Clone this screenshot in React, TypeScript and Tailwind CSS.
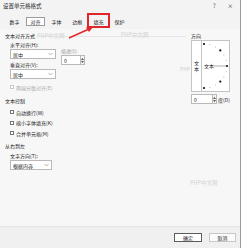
import React from "react";

const font = { fontFamily: '"Noto Sans CJK SC", "Noto Sans", sans-serif' };

function Select({ value, w }: { value: string; w: string }) {
  return (
    <div className={`flex h-[10px] items-center justify-between border border-[#b9b9b9] bg-white pl-[2px] pr-[1px] ${w}`}>
      <span className="text-[5px] leading-none text-[#222]">{value}</span>
      <svg width="5" height="4" viewBox="0 0 5 4" className="mr-[1px]">
        <path d="M0.5 1 L2.5 3 L4.5 1" stroke="#888" strokeWidth="0.6" fill="none" />
      </svg>
    </div>
  );
}

function Spin({ w }: { w: string }) {
  return (
    <div className="flex items-stretch">
      <div className={`flex h-[10px] items-center border border-[#b9b9b9] bg-white pl-[2px] ${w}`}>
        <span className="text-[5px] leading-none text-[#222]">0</span>
      </div>
      <div className="flex h-[10px] w-[4px] flex-col justify-center gap-[1px] border border-l-0 border-[#b9b9b9] bg-[#f4f4f4]">
        <svg width="3" height="2" viewBox="0 0 3 2"><path d="M0 2 L1.5 0 L3 2Z" fill="#555" /></svg>
        <svg width="3" height="2" viewBox="0 0 3 2"><path d="M0 0 L1.5 2 L3 0Z" fill="#555" /></svg>
      </div>
    </div>
  );
}

function Check({ label, disabled }: { label: string; disabled?: boolean }) {
  return (
    <div className="flex h-[10px] items-center gap-[2px]">
      <span className={`h-[4px] w-[4px] border ${disabled ? "border-[#c8c8c8]" : "border-[#777]"} bg-white`} />
      <span className={`text-[5px] leading-none ${disabled ? "text-[#aaa]" : "text-[#222]"}`}>{label}</span>
    </div>
  );
}

const tabs = ["数字", "对齐", "字体", "边框", "填充", "保护"];

export default function App() {
  return (
    <div style={font} className="relative flex h-[248px] w-[241px] flex-col overflow-hidden border-r border-[#9a9a9a] bg-[#f3f3f3]">
      {/* title bar */}
      <div className="flex h-[13px] items-center justify-between pl-[3px] pr-[7px]">
        <span className="text-[5.5px] leading-none text-[#222]">设置单元格格式</span>
        <div className="flex items-center gap-[12px] text-[5.5px] leading-none text-[#333]">
          <span>?</span>
          <span>×</span>
        </div>
      </div>

      {/* tabs */}
      <div className="flex h-[16px] items-center pl-[4px]">
        {tabs.map((t) => (
          <div key={t} className="relative flex w-[21px] items-center justify-center">
            <span
              className={`flex h-[9px] items-center px-[3px] text-[5px] leading-none text-[#222] ${
                t === "对齐" ? "border border-[#9c9c9c] bg-white" : ""
              }`}
            >
              {t}
            </span>
            {t === "填充" && (
              <span className="absolute left-[-1px] top-[-4px] h-[15px] w-[23px] border-2 border-[#e0262a]" />
            )}
          </div>
        ))}
      </div>

      {/* content */}
      <div className="flex flex-1 gap-[5px] bg-[#f7f7f7] pl-[5px] pr-[10px] pt-[3px]">
        <div className="flex flex-1 flex-col">
          <div className="flex items-center gap-[2px]">
            <span className="text-[5px] leading-[8px] text-[#222]">文本对齐方式</span>
            <span className="mt-[1px] h-px flex-1 bg-[#e6e6e6]" />
          </div>
          <div className="flex gap-[5px] pl-[5px] pt-[1px]">
            <div className="flex flex-col">
              <span className="text-[5px] leading-[8px] text-[#222]">水平对齐(H):</span>
              <Select value="居中" w="w-[46px]" />
              <span className="mt-[2px] text-[5px] leading-[8px] text-[#222]">垂直对齐(V):</span>
              <Select value="居中" w="w-[46px]" />
              <div className="mt-[3px]">
                <Check label="两端分散对齐(E)" disabled />
              </div>
            </div>
            <div className="flex flex-col pt-[6px]">
              <span className="text-[5px] leading-[8px] text-[#999]">缩进(I):</span>
              <Spin w="w-[20px]" />
            </div>
          </div>

          <span className="mt-[5px] text-[5px] leading-[8px] text-[#222]">文本控制</span>
          <div className="flex flex-col gap-[0.5px] pl-[5px] pt-[2px]">
            <Check label="自动换行(W)" />
            <Check label="缩小字体填充(K)" />
            <Check label="合并单元格(M)" />
          </div>

          <span className="mt-[4px] text-[5px] leading-[8px] text-[#222]">从右到左</span>
          <div className="flex flex-col pl-[5px] pt-[2px]">
            <span className="text-[5px] leading-[8px] text-[#222]">文字方向(T):</span>
            <Select value="根据内容" w="w-[42px]" />
          </div>
        </div>

        {/* orientation */}
        <div className="flex w-[39px] flex-col">
          <span className="text-[5px] leading-[8px] text-[#222]">方向</span>
          <div className="flex h-[52px] border border-[#c4c4c4] bg-white">
            <div className="flex w-[10px] items-center justify-center border-r border-[#c4c4c4]">
              <span className="flex flex-col text-[5px] leading-[6px] text-[#222]">
                <span>文</span>
                <span>本</span>
              </span>
            </div>
            <div className="relative flex-1">
              <svg width="27" height="50" viewBox="0 0 27 50" className="absolute left-0 top-0">
                {Array.from({ length: 13 }).map((_, i) => {
                  const a = (-90 + i * 15) * (Math.PI / 180);
                  const cx = 2 + 23 * Math.cos(a);
                  const cy = 25 + 22 * Math.sin(a);
                  const big = i % 3 === 0;
                  return <circle key={i} cx={cx} cy={cy} r={big ? 1.1 : 0.45} fill={big ? "#111" : "#777"} />;
                })}
                <line x1="12" y1="25" x2="25" y2="25" stroke="#555" strokeWidth="0.5" />
              </svg>
              <span className="absolute left-[2px] top-[22px] text-[5px] leading-none text-[#222]">文本</span>
            </div>
          </div>
          <div className="mt-[2px] flex items-center gap-[1px]">
            <Spin w="w-[22px]" />
            <span className="text-[5px] leading-none text-[#222]">度(D)</span>
          </div>
        </div>
      </div>

      {/* footer */}
      <div className="flex h-[22px] items-center justify-end gap-[7px] border-t border-[#e4e4e4] bg-[#f0f0f0] pr-[4px]">
        <span className="flex h-[9px] w-[28px] items-center justify-center border border-[#5c5c5c] bg-white text-[5px] leading-none text-[#222]">
          确定
        </span>
        <span className="flex h-[9px] w-[27px] items-center justify-center border border-[#c8c8c8] bg-[#fbfbfb] text-[5px] leading-none text-[#222]">
          取消
        </span>
      </div>

      {/* watermarks */}
      <span className="pointer-events-none absolute left-[37px] top-[32px] text-[5.5px] text-[#d4d4d4]">PHP中文网</span>
      <span className="pointer-events-none absolute left-[121px] top-[31px] text-[5.5px] text-[#d4d4d4]">PHP中文网</span>
      <span className="pointer-events-none absolute left-[180px] top-[65px] text-[5px] text-[#d0d0d0]">PHP</span>
      <span className="pointer-events-none absolute left-[190px] top-[179px] text-[5.5px] text-[#d4d4d4]">PHP中文网</span>

      {/* annotation arrow */}
      <svg width="241" height="248" className="pointer-events-none absolute left-0 top-0">
        <line x1="69" y1="38" x2="89" y2="29" stroke="#e0262a" strokeWidth="1.4" />
        <path d="M93 27 L86 27.5 L89 32 Z" fill="#e0262a" />
      </svg>
    </div>
  );
}
